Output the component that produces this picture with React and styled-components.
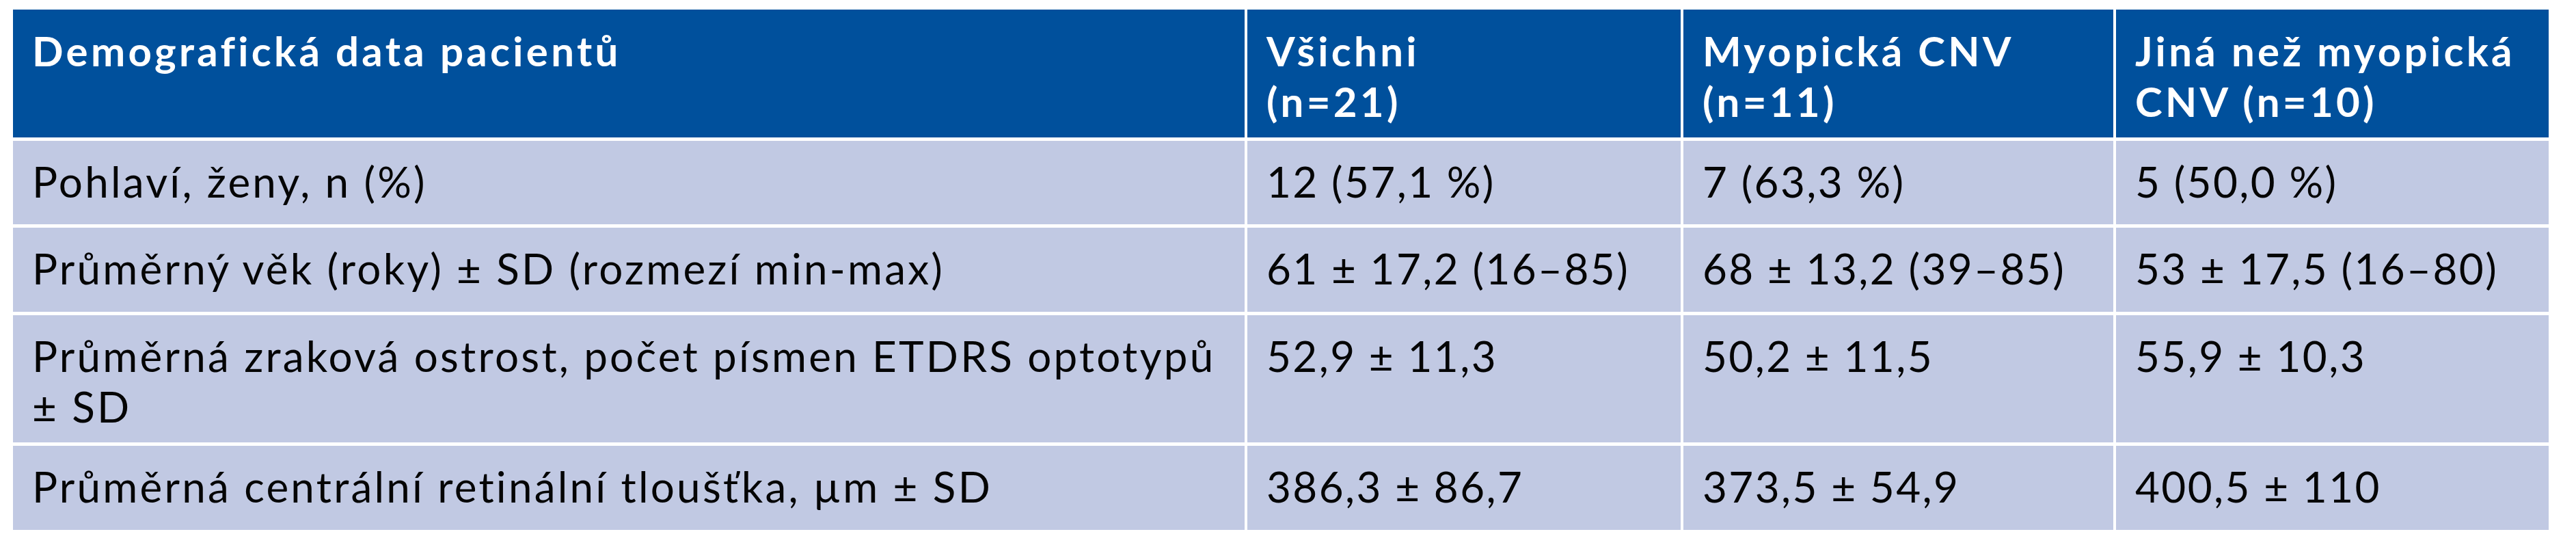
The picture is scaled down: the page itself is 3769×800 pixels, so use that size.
import React from "react"
import styled, { createGlobalStyle } from "styled-components"

const GlobalStyle = createGlobalStyle`
    html, body {
        margin: 0;
        padding: 0;
        background: #ffffff;
    }
`

const Page = styled.div`
    padding: 14px 0 0 19px;
    width: 3769px;
    height: 800px;
    box-sizing: border-box;
    background: #ffffff;
    font-family: Lato, "Open Sans", "Liberation Sans", sans-serif;
`

const Table = styled.div`
    display: grid;
    width: 3710px;
    grid-template-columns: 1802px 634px 629px 633px;
    grid-template-rows: 187px 122px 123px 186px 123px;
    column-gap: 4px;
    row-gap: 5px;
    background: #ffffff;
`

const HeadCell = styled.div`
    background: #00509c;
    color: #ffffff;
    font-weight: 700;
    font-size: 60px;
    letter-spacing: 4.3px;
    line-height: 74px;
    padding: 23px 16px 0 28px;
    box-sizing: border-box;
`

const Cell = styled.div`
    background: #c1c9e3;
    color: #050505;
    font-weight: 400;
    font-size: 62px;
    letter-spacing: ${(p) => (p.$value ? "2.4px" : "3.2px")};
    line-height: 74px;
    padding: 22px 16px 0 28px;
    box-sizing: border-box;
    white-space: nowrap;
`

const headers = [
    ["Demografická data pacientů"],
    ["Všichni", "(n=21)"],
    ["Myopická CNV", "(n=11)"],
    ["Jiná než myopická", "CNV (n=10)"],
]

const rows = [
    [["Pohlaví, ženy, n (%)"], ["12 (57,1\u00a0%)"], ["7 (63,3\u00a0%)"], ["5 (50,0\u00a0%)"]],
    [["Průměrný věk (roky) ± SD (rozmezí min-max)"], ["61 ± 17,2 (16–85)"], ["68 ± 13,2 (39–85)"], ["53 ± 17,5 (16–80)"]],
    [["Průměrná zraková ostrost, počet písmen ETDRS optotypů", "± SD"], ["52,9 ± 11,3"], ["50,2 ± 11,5"], ["55,9 ± 10,3"]],
    [["Průměrná centrální retinální tloušťka, µm ± SD"], ["386,3 ± 86,7"], ["373,5 ± 54,9"], ["400,5 ± 110"]],
]

// lines are kept as the table breaks them
const Lines = ({ lines }) =>
    lines.map((line, i) => (
        <React.Fragment key={i}>
            {i > 0 && <br />}
            {line}
        </React.Fragment>
    ))

const App = () => (
    <>
        <GlobalStyle />
        <Page>
            <Table>
                {headers.map((h, i) => (
                    <HeadCell key={"h" + i}>
                        <Lines lines={h} />
                    </HeadCell>
                ))}
                {rows.map((row, r) =>
                    row.map((cell, c) => (
                        <Cell key={r + "-" + c} $value={c > 0}>
                            <Lines lines={cell} />
                        </Cell>
                    ))
                )}
            </Table>
        </Page>
    </>
)

export default App
